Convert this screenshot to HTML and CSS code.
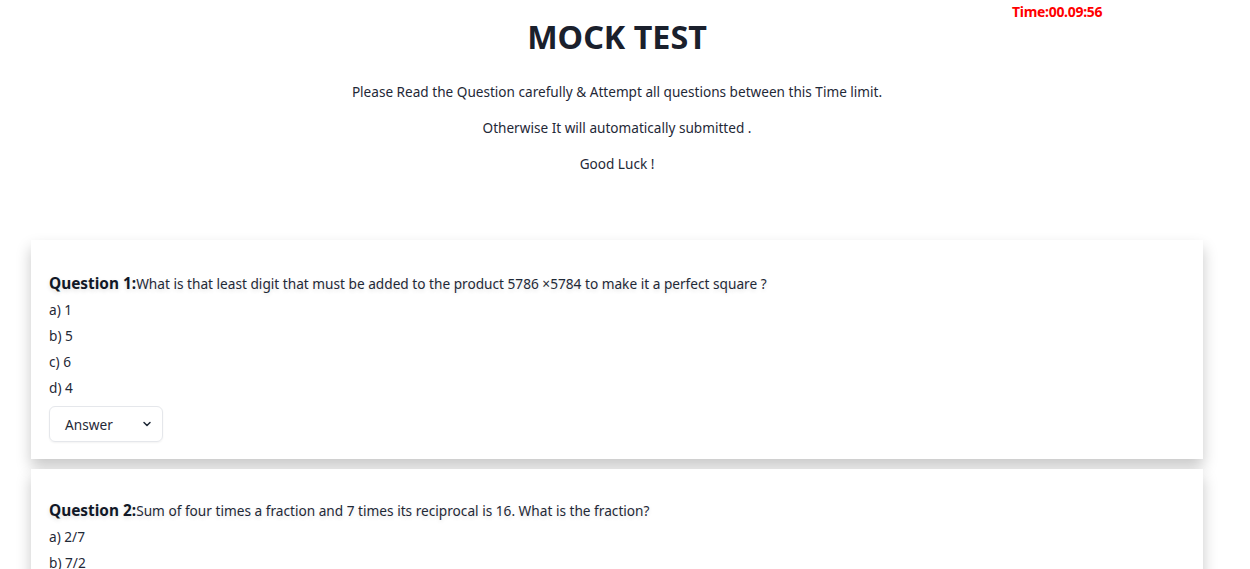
FILE: index.html
```html
<!DOCTYPE html>
<html>
<head>
<meta charset="utf-8">
<link rel="stylesheet" href="styles.css">
</head>
<body>
<div class="page">
  <div class="timer">Time:00.09:56</div>
  <header class="intro">
    <h1 class="title">MOCK TEST</h1>
    <p class="note">Please Read the Question carefully &amp; Attempt all questions between this Time limit.</p>
    <p class="note">Otherwise It will automatically submitted .</p>
    <p class="note">Good Luck !</p>
  </header>
  <main class="questions">
    <section class="card">
      <p class="q"><b class="qlabel">Question 1:</b>What is that least digit that must be added to the product 5786 ×5784 to make it a perfect square ?</p>
      <p class="opt">a) 1</p>
      <p class="opt">b) 5</p>
      <p class="opt">c) 6</p>
      <p class="opt">d) 4</p>
      <div class="select"><span>Answer</span>
        <svg class="chev" width="10" height="10" viewBox="0 0 10 10"><path d="M2 3.5 L5 6.5 L8 3.5" fill="none" stroke="#1f2937" stroke-width="1.5" stroke-linecap="round" stroke-linejoin="round"/></svg>
      </div>
    </section>
    <section class="card card-second">
      <p class="q"><b class="qlabel">Question 2:</b>Sum of four times a fraction and 7 times its reciprocal is 16. What is the fraction?</p>
      <p class="opt">a) 2/7</p>
      <p class="opt">b) 7/2</p>
      <p class="opt">c) 4/7</p>
      <p class="opt">d) 7/4</p>
    </section>
  </main>
</div>
</body>
</html>
```
FILE: styles.css
```css
* { box-sizing: border-box; }
html, body { margin: 0; padding: 0; background: #fff; overflow: hidden; }
body { font-family: "Noto Sans", "Open Sans", sans-serif; color: #1f2937; }
.page { width: 1234px; position: relative; }
.timer {
  position: absolute; top: 3px; left: 1012px;
  color: #ff0000; font-weight: 700; font-size: 14px; line-height: 18px;
  letter-spacing: -0.3px;
}
.intro { text-align: center; padding-top: 14px; }
.title {
  margin: 0; font-size: 32.3px; line-height: 44px; font-weight: 700;
  color: #1a202c;
}
.note { margin: 0; font-size: 13.6px; line-height: 36px; color: #1f2937; }
.intro .title + .note { margin-top: 16px; }
.questions { padding: 58px 31px 0; display: flex; flex-direction: column; gap: 10px; }
.card {
  background: #fff; padding: 31px 18px 17px;
  box-shadow: 0 8px 14px rgba(0,0,0,0.22);
}
.card-second { padding-top: 29px; }
.card p { margin: 0; font-size: 13.66px; line-height: 26px; color: #1f2937; }
.card .q { text-shadow: 0 2px 4px rgba(0,0,0,0.12); }
.qlabel { font-size: 15.4px; font-weight: 700; color: #111827; }
.select {
  margin-top: 5px; width: 114px; height: 36px;
  border: 1px solid #e5e7eb; border-radius: 6px;
  box-shadow: 0 1px 2px rgba(0,0,0,0.05);
  display: flex; align-items: center; justify-content: space-between;
  padding: 0 10px 0 15px; font-size: 13.66px; color: #1f2937;
}
.chev { display: block; }
```
